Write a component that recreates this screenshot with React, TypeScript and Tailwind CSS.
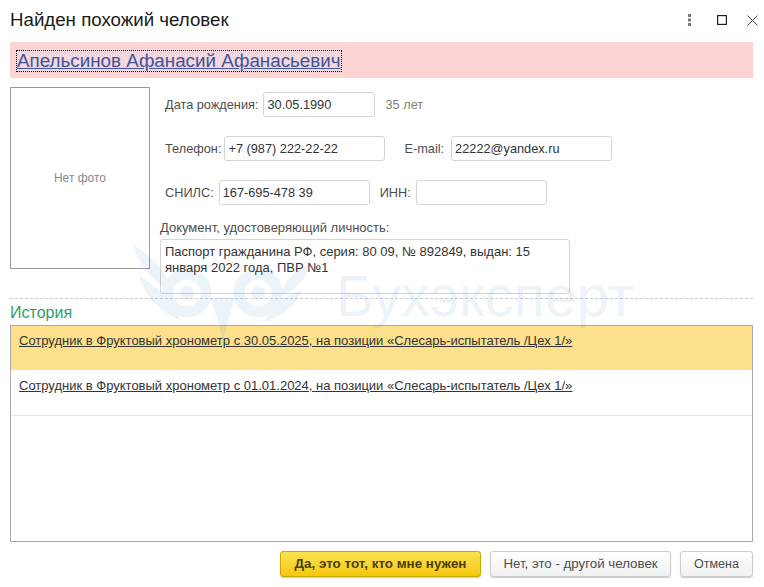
const inputCls = 'h-[25px] rounded-[3px] border border-[#d4d4d4] bg-white px-[3px] text-[12.75px] leading-[23px] text-[#333]';

function Field({ value, width }: { value: string; width: string }) {
  return <div className={`${inputCls} ${width}`}>{value}</div>;
}

// Faint logo and name lying over the form
function Watermark() {
  return (
    <div className="pointer-events-none absolute left-[130px] top-[240px] z-10 flex items-center opacity-[0.08]">
      <svg width="190" height="105" viewBox="0 0 190 105" fill="#1a6fc0">
        <path d="M3 5 C22 16 36 30 42 52 C26 44 10 28 3 5Z" />
        <path d="M9 36 C16 58 30 72 50 80 C44 64 28 46 9 36Z" />
        <path d="M181 23 C165 30 155 40 150 56 C165 51 176 40 181 23Z" />
        <path d="M172 50 C166 66 152 76 134 82 C140 68 154 56 172 50Z" />
        <circle cx="57" cy="53" r="19" fill="none" stroke="#1a6fc0" strokeWidth="11" />
        <circle cx="57" cy="53" r="7" />
        <circle cx="128" cy="53" r="19" fill="none" stroke="#1a6fc0" strokeWidth="11" />
        <circle cx="128" cy="53" r="7" />
        <path d="M80 58 L105 58 L99 78 L93 100 L87 78Z" />
      </svg>
      <span className="ml-[16px] mt-[9px] text-[57.5px] leading-none text-[#1a6fc0]">Бухэксперт</span>
    </div>
  );
}

export default function App() {
  return (
    <div className="relative flex h-[587px] w-[764px] flex-col overflow-hidden bg-white px-[10px] font-['Liberation_Sans',Arial,sans-serif] text-[12.75px] text-[#4d4d4d]">
      <Watermark />

      <header className="flex h-[42px] items-center justify-between pb-[2px]">
        <h1 className="text-[18.7px] leading-none text-[#1a1a1a]">Найден похожий человек</h1>
        <div className="-mr-[4px] flex items-center">
          <svg width="10" height="12" viewBox="0 0 10 12" fill="#777"><rect x="3" y="0" width="3" height="3" /><rect x="3" y="4.5" width="3" height="3" /><rect x="3" y="9" width="3" height="3" /></svg>
          <svg className="ml-[22px]" width="10" height="10" viewBox="0 0 10 10" fill="none" stroke="#222" strokeWidth="1.2"><rect x="0.6" y="0.6" width="8.8" height="8.8" /></svg>
          <svg className="ml-[20px]" width="11" height="11" viewBox="0 0 11 11" fill="none" stroke="#444" strokeWidth="1"><path d="M0.5 0.5 L10.5 10.5 M10.5 0.5 L0.5 10.5" /></svg>
        </div>
      </header>

      <div className="flex h-[36px] w-[743px] items-center bg-[#fcd4d4] pl-[6px] pt-[1px]">
        <a className="border border-dotted border-black bg-[#e8dff0]/40 text-[18.8px] leading-[20px] text-[#3f5596] underline">Апельсинов Афанасий Афанасьевич</a>
      </div>

      <div className="mt-[9px] flex h-[211px]">
        <div className="flex h-[182px] w-[140px] items-center justify-center border border-[#999] bg-white text-[12px] text-[#8a8a8a]">Нет фото</div>
        <div className="ml-[15px] flex flex-col">
          <div className="mt-[5px] flex h-[25px] items-center">
            <span>Дата рождения:</span>
            <div className="ml-[5px]"><Field value="30.05.1990" width="w-[112px]" /></div>
            <span className="ml-[10px] text-[#86806a]">35 лет</span>
          </div>
          <div className="mt-[19px] flex h-[25px] items-center">
            <span>Телефон:</span>
            <div className="ml-[3px]"><Field value="+7 (987) 222-22-22" width="w-[161px]" /></div>
            <span className="ml-[19px]">E-mail:</span>
            <div className="ml-[7px]"><Field value="22222@yandex.ru" width="w-[161px]" /></div>
          </div>
          <div className="mt-[19px] flex h-[25px] items-center">
            <span>СНИЛС:</span>
            <div className="ml-[5px]"><Field value="167-695-478 39" width="w-[151px]" /></div>
            <span className="ml-[10px]">ИНН:</span>
            <div className="ml-[5px]"><Field value="" width="w-[131px]" /></div>
          </div>
          <label className="mt-[16px] -ml-[5px] block text-[13px] leading-[14px]">Документ, удостоверяющий личность:</label>
          <div className="mt-[4px] -ml-[5px] h-[55px] w-[410px] rounded-[3px] border border-[#d4d4d4] bg-white px-[4px] pt-[4px] text-[13px] leading-[16px] text-[#333]">
            Паспорт гражданина РФ, серия: 80 09, № 892849, выдан: 15 января 2022 года, ПВР №1
          </div>
        </div>
      </div>

      <div className="w-[743px] border-t border-dashed border-[#ccc]" />

      <h2 className="mt-[4px] text-[16px] leading-[20px] text-[#2e9e5f]">История</h2>

      <div className="mt-[2px] h-[217px] w-[743px] border border-[#aaa]">
        <div className="h-[44px] bg-[#fce08b] px-[8px] pt-[5px] text-[13px] text-[#333] underline">Сотрудник в Фруктовый хронометр с 30.05.2025, на позиции «Слесарь-испытатель /Цех 1/»</div>
        <div className="mt-[1px] h-[45px] border-b border-[#e6e6e6] bg-white px-[8px] pt-[5px] text-[13px] text-[#333] underline">Сотрудник в Фруктовый хронометр с 01.01.2024, на позиции «Слесарь-испытатель /Цех 1/»</div>
      </div>

      <footer className="mt-[9px] flex w-[743px] justify-end gap-[9px]">
        <button className="h-[26px] w-[201px] rounded-[3px] border border-[#c9a800] bg-gradient-to-b from-[#fbe34d] to-[#f6c800] text-[13.4px] font-bold text-[#4a3d00] shadow-[0_1px_1px_rgba(0,0,0,0.2)]">Да, это тот, кто мне нужен</button>
        <button className="h-[26px] w-[181px] rounded-[3px] border border-[#ccc] bg-gradient-to-b from-white to-[#f0f0f0] text-[13.3px] text-[#4d4d4d] shadow-[0_1px_1px_rgba(0,0,0,0.2)]">Нет, это - другой человек</button>
        <button className="h-[26px] w-[73px] rounded-[3px] border border-[#ccc] bg-gradient-to-b from-white to-[#f0f0f0] text-[12.5px] text-[#4d4d4d] shadow-[0_1px_1px_rgba(0,0,0,0.2)]">Отмена</button>
      </footer>
    </div>
  );
}
